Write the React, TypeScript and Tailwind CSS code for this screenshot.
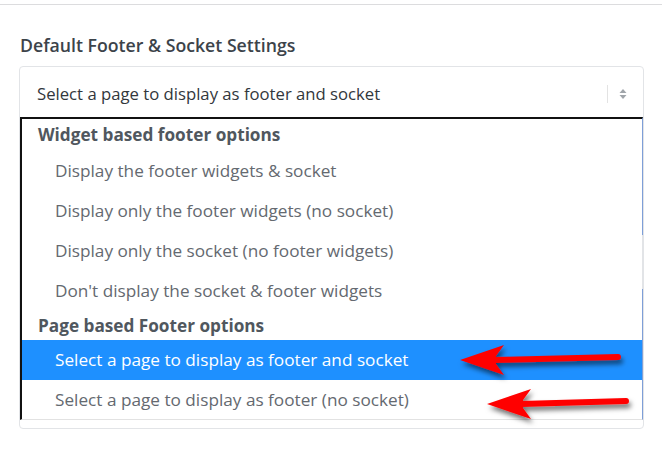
import React from "react";

const font = { fontFamily: '"Open Sans", "Noto Sans", sans-serif' };

function Arrow({ w, h }: { w: number; h: number }) {
  return (
    <svg width={w} height={h} viewBox={`0 0 ${w} ${h}`} style={{ overflow: "visible" }}>
      <defs>
        <filter id="sh" x="-20%" y="-50%" width="140%" height="200%">
          <feDropShadow dx="2" dy="4" stdDeviation="2.5" floodColor="#000" floodOpacity="0.55" />
        </filter>
      </defs>
      <g filter="url(#sh)">
        <polygon points={`0,${h / 2} 44,3 36,${h / 2 - 4} 36,${h / 2 + 4} 44,${h - 3}`} fill="#ff0000" />
        <line x1="34" y1={h / 2} x2={w - 4} y2={h / 2 - 3} stroke="#ff0000" strokeWidth="6" strokeLinecap="round" />
      </g>
    </svg>
  );
}

export default function App() {
  const widgetOpts = [
    "Display the footer widgets & socket",
    "Display only the footer widgets (no socket)",
    "Display only the socket (no footer widgets)",
    "Don't display the socket & footer widgets",
  ];
  return (
    <div className="relative w-[662px] h-[456px] bg-white overflow-hidden" style={font}>
      <div className="h-[4px]" />
      <div className="h-px bg-[#dcdcde]" />
      <div className="pl-[20px] pt-[28px]">
        <div className="text-[17.7px] font-semibold text-[#3c434a] leading-[24px]">
          Default Footer &amp; Socket Settings
        </div>
      </div>
      <div className="relative ml-[19px] mt-[9px] w-[625px] h-[363px] border border-[#e2e4e7] rounded-[4px]">
        <div className="flex items-center h-[50px] pt-[4px] pl-[17px] pr-[16px]">
          <span className="flex-1 text-[16.7px] text-[#32373c]">Select a page to display as footer and socket</span>
          <span className="w-px h-[18px] bg-[#e3e3e3] mr-[11px]" />
          <svg width="8" height="12" viewBox="0 0 8 12">
            <polygon points="4,1 7.5,5 0.5,5" fill="#a0a5aa" />
            <polygon points="4,11 7.5,7 0.5,7" fill="#a0a5aa" />
          </svg>
        </div>
        <div className="absolute left-0 top-[50px] w-[623px] h-[303px] bg-white border-l-2 border-l-[#111] border-t-2 border-t-[#111] border-r border-r-[#7e9fd8] border-b border-b-[#e2e2e2]">
          <div className="h-[32px] flex items-center pl-[16px] text-[17.2px] font-bold text-[#50575e]">
            Widget based footer options
          </div>
          {widgetOpts.map((t) => (
            <div key={t} className="h-[40px] flex items-center pl-[33px] text-[17.2px] text-[#646970]">
              {t}
            </div>
          ))}
          <div className="h-[29px] flex items-center pl-[16px] text-[17.2px] font-bold text-[#50575e]">
            Page based Footer options
          </div>
          <div className="h-[40px] flex items-center pl-[33px] text-[17.2px] text-white bg-[#1e90ff]">
            Select a page to display as footer and socket
          </div>
          <div className="h-[40px] flex items-center pl-[33px] text-[17.2px] text-[#646970]">
            Select a page to display as footer (no socket)
          </div>
        </div>
      </div>
      <div className="absolute left-[642px] top-[235px] w-px h-[54px] bg-[#e2e4e7]" />
      <div className="absolute left-[460px] top-[342px]">
        <Arrow w={162} h={36} />
      </div>
      <div className="absolute left-[487px] top-[386px]">
        <Arrow w={143} h={36} />
      </div>
    </div>
  );
}
